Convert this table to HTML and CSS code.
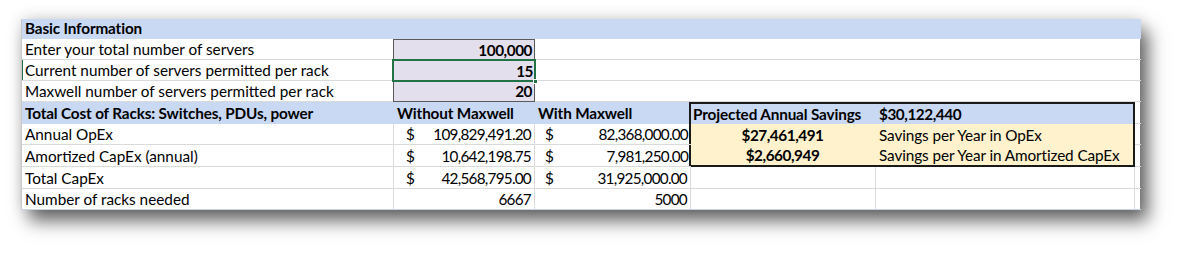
FILE: index.html
```html
<!DOCTYPE html>
<html lang="en">
<head>
<meta charset="utf-8">
<title>Maxwell savings</title>
<link rel="stylesheet" href="styles.css">
</head>
<body>
<div class="sheet">
  <!-- Row 1 -->
  <div class="c hdr full b">Basic Information</div>

  <!-- Rows 2-4 -->
  <div class="c a r2">Enter your total number of servers</div>
  <div class="inputs">
    <div class="in">100,000</div>
    <div class="in sel">15<span class="handle"></span></div>
    <div class="in">20</div>
  </div>
  <div class="c rest r2"></div>

  <div class="c a r3 active">Current number of servers permitted per rack</div>
  <div class="c rest r3"></div>

  <div class="c a r4">Maxwell number of servers permitted per rack</div>
  <div class="c rest r4"></div>

  <!-- Row 5 -->
  <div class="c hdr b r5 colA">Total Cost of Racks: Switches, PDUs, power</div>
  <div class="c hdr b r5 colB">Without Maxwell</div>
  <div class="c hdr b r5 colC">With Maxwell</div>
  <div class="box">
    <div class="bx-row blue b">
      <div class="bx-d">Projected Annual Savings</div>
      <div class="bx-e"><span class="nb">$30,122,440</span></div>
    </div>
    <div class="bx-row yellow">
      <div class="bx-d ctr b"><span class="nb">$27,461,491</span></div>
      <div class="bx-e">Savings per Year in OpEx</div>
    </div>
    <div class="bx-row yellow">
      <div class="bx-d ctr b"><span class="nb">$2,660,949</span></div>
      <div class="bx-e">Savings per Year in Amortized CapEx</div>
    </div>
  </div>
  <div class="c f r5 colF"></div>

  <!-- Row 6 -->
  <div class="c a vr r6">Annual OpEx</div>
  <div class="c acc vr r6 colB"><span class="cur">$</span><span class="n">109,829,491.20</span></div>
  <div class="c acc r6 colC accC"><span class="cur">$</span><span class="n">82,368,000.00</span></div>
  <div class="c f r6 colF"></div>

  <!-- Row 7 -->
  <div class="c a vr r7">Amortized CapEx (annual)</div>
  <div class="c acc vr r7 colB"><span class="cur">$</span><span class="n">10,642,198.75</span></div>
  <div class="c acc r7 colC accC"><span class="cur">$</span><span class="n">7,981,250.00</span></div>
  <div class="c f r7 colF"></div>

  <!-- Row 8 -->
  <div class="c a vr r8">Total CapEx</div>
  <div class="c acc vr r8 colB"><span class="cur">$</span><span class="n">42,568,795.00</span></div>
  <div class="c acc vr r8 colC accC"><span class="cur">$</span><span class="n">31,925,000.00</span></div>
  <div class="c vr r8 colD"></div>
  <div class="c vr r8 colE"></div>
  <div class="c f r8 colF"></div>

  <!-- Row 9 -->
  <div class="c a vr r9 last">Number of racks needed</div>
  <div class="c num vr r9 colB last"><span class="n">6667</span></div>
  <div class="c num vr r9 colC last"><span class="n">5000</span></div>
  <div class="c vr r9 colD last"></div>
  <div class="c vr r9 colE last"></div>
  <div class="c f r9 colF last"></div>
</div>
</body>
</html>
```

FILE: styles.css
```css
* { box-sizing: border-box; }

body {
  margin: 0;
  background: #ffffff;
  width: 1180px;
  height: 266px;
  overflow: hidden;
  font-family: "Lato", "Liberation Sans", sans-serif;
  font-size: 15.3px;
  color: #000000;
}

.sheet {
  margin: 19px 0 0 21px;
  width: 1119px;
  display: grid;
  grid-template-columns: 372px 141px 156px 185px 259px 6px;
  grid-template-rows: 20px 21px 21px 21px 22px 21px 22px 22px 21px;
  background: #ffffff;
  border-left: 1px solid #c8c8c8;
  box-shadow: 8px 11px 17px rgba(0, 0, 0, 0.6), 0 -2px 14px rgba(0, 0, 0, 0.12);
}

.c {
  display: flex;
  align-items: flex-end;
  padding: 0 3px 1px 3px;
  white-space: nowrap;
  border-bottom: 1px solid #dadada;
  line-height: 18px;
}

.b { font-weight: 700; }
.b.c, .bx-row.b { letter-spacing: -0.15px; }

.n { letter-spacing: -0.75px; }
.nb { letter-spacing: -0.45px; }

.hdr {
  background: #c9d9f4;
  border-bottom: 1px solid #c9d9f4;
}

.full { grid-column: 1 / 7; grid-row: 1; }

.a { grid-column: 1; }
.colA { grid-column: 1; }
.colB { grid-column: 2; }
.colC { grid-column: 3; }
.colD { grid-column: 4; }
.colE { grid-column: 5; }
.colF { grid-column: 6; }
.rest { grid-column: 3 / 7; }

.r2 { grid-row: 2; }
.r3 { grid-row: 3; }
.r4 { grid-row: 4; }
.r5 { grid-row: 5; }
.r6 { grid-row: 6; }
.r7 { grid-row: 7; }
.r8 { grid-row: 8; }
.r9 { grid-row: 9; }

.r5.colF { border-bottom: 1px solid #dadada; }

.active { box-shadow: inset 1px 0 0 #217346; }

.vr { border-right: 1px solid #dadada; }

.last { border-bottom: 1px solid #c6d4ee; }

.f { padding: 0; }

/* input block */
.inputs {
  grid-column: 2;
  grid-row: 2 / 5;
  display: grid;
  grid-template-rows: 1fr 1fr 1fr;
  background: #e4dfec;
  border: 1px solid #5a5a5a;
  margin-left: -1px;
  position: relative;
}

.in {
  display: flex;
  justify-content: flex-end;
  align-items: flex-end;
  padding: 0 2px 1px 3px;
  font-weight: 700;
  line-height: 18px;
  letter-spacing: -0.45px;
}

.sel {
  position: relative;
  outline: 2px solid #217346;
  outline-offset: -1px;
  margin-left: -1px;
  margin-right: -1px;
}

.handle {
  position: absolute;
  right: -3px;
  bottom: -3px;
  width: 5px;
  height: 5px;
  background: #217346;
  border: 1px solid #ffffff;
}

/* accounting */
.acc { justify-content: space-between; padding-left: 12px; }
.accC { padding-left: 10px; }
.num { justify-content: flex-end; }

/* savings box */
.box {
  grid-column: 4 / 6;
  grid-row: 5 / 8;
  border: 2px solid #1a1a1a;
  margin-left: -2px;
  display: grid;
  grid-template-rows: 1fr 1fr 1fr;
  background: #fff2cc;
}

.bx-row {
  display: grid;
  grid-template-columns: 184px 1fr;
}

.blue { background: #c9d9f4; }
.yellow { background: #fff2cc; }

.bx-d, .bx-e {
  display: flex;
  align-items: flex-end;
  padding: 0 3px 1px 3px;
  line-height: 18px;
  white-space: nowrap;
}

.bx-d { padding-left: 2px; }
.bx-e { padding-left: 4px; letter-spacing: -0.1px; }
.ctr { justify-content: center; }
```
